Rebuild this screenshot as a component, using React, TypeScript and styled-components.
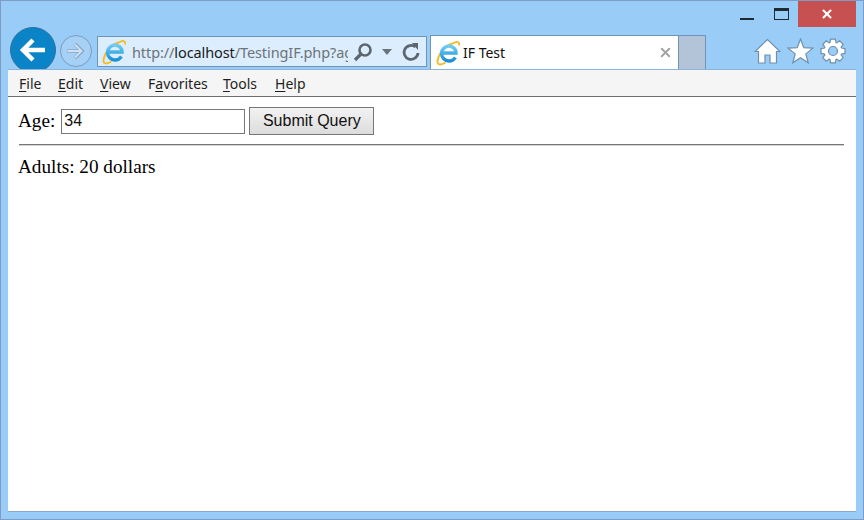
import React, { FC } from "react";
import styled, { createGlobalStyle } from "styled-components";
import { X } from "lucide-react";

const Global = createGlobalStyle`
    html, body {
        margin: 0;
        padding: 0;
        background: #99ccf8;
    }
`;

const Window = styled.div`
    box-sizing: border-box;
    width: 864px;
    height: 520px;
    display: flex;
    flex-direction: column;
    background: #99ccf7;
    border: 1px solid #7c9cc4;
    overflow: hidden;
    padding: 0 7px 7px 7px;
`;

const TitleBar = styled.div`
    height: 34px;
    flex: none;
    display: flex;
    justify-content: flex-end;
    align-items: flex-start;
`;

const WinButton = styled.div`
    width: 34px;
    height: 26px;
    display: flex;
    align-items: center;
    justify-content: center;
`;

const CloseButton = styled(WinButton)`
    width: 58px;
    background: #c75050;
    color: #fff;
`;

const MinGlyph = styled.div`
    width: 14px;
    height: 2px;
    background: #1f2a33;
    margin-top: 10px;
`;

const MaxGlyph = styled.div`
    box-sizing: border-box;
    width: 15px;
    height: 12px;
    border: 1px solid #1f2a33;
    border-top-width: 3px;
`;

const NavBar = styled.div`
    height: 34px;
    flex: none;
    display: flex;
    align-items: flex-start;
`;

const BackButton = styled.div`
    box-sizing: border-box;
    flex: none;
    width: 46px;
    height: 46px;
    margin: -8px 0 0 2px;
    border-radius: 50%;
    background: #0a84c6;
    border: 1px solid #2f6f9f;
    display: flex;
    align-items: center;
    justify-content: center;
`;

const ForwardButton = styled.div`
    box-sizing: border-box;
    flex: none;
    width: 32px;
    height: 32px;
    margin: 0 0 0 4px;
    border-radius: 50%;
    border: 1px solid #7d9cc0;
    background: #a6d0f5;
    display: flex;
    align-items: center;
    justify-content: center;
`;

const AddressBar = styled.div`
    box-sizing: border-box;
    flex: none;
    width: 330px;
    height: 31px;
    margin: 1px 0 0 5px;
    background: #dceefe;
    border: 1px solid #6f94ba;
    display: flex;
    align-items: center;
    padding-left: 4px;
`;

const Url = styled.div`
    flex: none;
    width: 216px;
    margin-left: 6px;
    overflow: hidden;
    white-space: nowrap;
    font: 14.5px "Noto Sans", sans-serif;
    letter-spacing: -0.1px;
    color: #6d7377;

    b {
        font-weight: 400;
        color: #1a1a1a;
    }
`;

const AddressTools = styled.div`
    display: flex;
    align-items: center;
    margin-left: 5px;
    gap: 9px;
`;

const Tab = styled.div`
    box-sizing: border-box;
    flex: none;
    width: 249px;
    height: 34px;
    margin-left: 3px;
    background: #fff;
    border: 1px solid #6f94ba;
    border-bottom: none;
    display: flex;
    align-items: center;
    padding: 0 5px 0 5px;
`;

const TabTitle = styled.div`
    flex: 1;
    margin-left: 3px;
    font: 14px "Noto Sans", sans-serif;
    color: #111;
`;

const NewTab = styled.div`
    box-sizing: border-box;
    flex: none;
    width: 27px;
    height: 34px;
    background: #b3c3d8;
    border: 1px solid #6f94ba;
    border-bottom: none;
    border-left: none;
`;

const ToolIcons = styled.div`
    display: flex;
    align-items: center;
    gap: 6px;
    margin: 3px 0 0 48px;
`;

const MenuBar = styled.div`
    position: relative;
    flex: none;
    box-sizing: border-box;
    height: 28px;
    background: #f5f5f5;
    border-top: 1px solid #8db4dc;
    border-bottom: 1px solid #6e6e6e;
    display: flex;
    align-items: center;
    padding-left: 11px;
`;

const MenuItem = styled.div<{ $width: number }>`
    width: ${(p) => p.$width}px;
    font: 14px "Noto Sans", sans-serif;
    color: #1e1e1e;

    u {
        text-underline-offset: 2px;
    }
`;

const Page = styled.div`
    flex: 1;
    background: #fff;
    border-bottom: 1px solid #8aa6c6;
    padding: 10px 12px 0 10px;
    font: 19.2px "Liberation Serif", serif;
    color: #000;
`;

const QueryForm = styled.form`
    display: flex;
    align-items: center;
    height: 28px;
`;

const AgeInput = styled.input`
    box-sizing: border-box;
    width: 184px;
    height: 25px;
    margin-left: 6px;
    padding: 0 2px;
    border: 1px solid #777;
    font: 16px "Liberation Sans", sans-serif;
    color: #111;
    outline: none;
`;

const SubmitButton = styled.button`
    box-sizing: border-box;
    width: 125px;
    height: 28px;
    margin-left: 4px;
    padding: 0;
    border: 1px solid #777;
    background: linear-gradient(#f2f2f2, #dcdcdc);
    font: 16px "Liberation Sans", sans-serif;
    color: #111;
`;

const Rule = styled.div`
    height: 1px;
    margin: 9px 0 0 1px;
    background: #777;
    border-bottom: 1px solid #d4d4d4;
`;

const Result = styled.div`
    margin-top: 10px;
`;

const IeLogo: FC = () => (
    <svg width="24" height="26" viewBox="0 0 24 26">
        <defs>
            <linearGradient id="ieBlue" x1="0" y1="0" x2="0" y2="1">
                <stop offset="0" stopColor="#6fcdf4" />
                <stop offset="1" stopColor="#1b8fd6" />
            </linearGradient>
        </defs>
        <path
            d="M17 3.500C20.500 1 24 1.500 23 5.500M17 3.500C9 5 2.500 14 1.500 21 1 25 5 25.500 9.500 22.500"
            fill="none"
            stroke="#f3bd2a"
            strokeWidth="1.900"
        />
        <path
            d="M6 13h14c0-4-3-7-7-7s-7.500 3.500-7.500 7.500 3.500 7.500 7.500 7.500c3 0 5-1.500 6.500-3.500"
            fill="none"
            stroke="url(#ieBlue)"
            strokeWidth="3.400"
        />
    </svg>
);

// 8-tooth cog outline, centred on 13,13
const cogPath = (() => {
    const pts: string[] = [];
    for (let i = 0; i < 8; i++) {
        const a = (i * Math.PI) / 4;
        [
            [-0.34, 9],
            [-0.2, 12.2],
            [0.2, 12.2],
            [0.34, 9],
        ].forEach(([da, r]) => {
            pts.push(`${(13 + r * Math.cos(a + da)).toFixed(2)} ${(13 + r * Math.sin(a + da)).toFixed(2)}`);
        });
    }
    return `M${pts.join("L")}Z`;
})();

const MENU: { before: string; key: string; after: string; width: number }[] = [
    { before: "", key: "F", after: "ile", width: 39 },
    { before: "", key: "E", after: "dit", width: 42 },
    { before: "", key: "V", after: "iew", width: 48 },
    { before: "F", key: "a", after: "vorites", width: 75 },
    { before: "", key: "T", after: "ools", width: 52 },
    { before: "", key: "H", after: "elp", width: 40 },
];

export default function App() {
    return (
        <Window>
            <Global />
            <TitleBar>
                <WinButton>
                    <MinGlyph />
                </WinButton>
                <WinButton>
                    <MaxGlyph />
                </WinButton>
                <CloseButton>
                    <X size={14} strokeWidth={3.500} />
                </CloseButton>
            </TitleBar>
            <NavBar>
                <BackButton>
                    <svg width="28" height="26" viewBox="0 0 28 26">
                        <path d="M26 13H5M14 3 4 13l10 10" fill="none" stroke="#fff" strokeWidth="4.500" />
                    </svg>
                </BackButton>
                <ForwardButton>
                    <svg width="20" height="18" viewBox="0 0 20 18">
                        <path d="M1 9h15M9 2l7 7-7 7" fill="none" stroke="#86a6c6" strokeWidth="3.600" />
                        <path d="M1.500 9h14M9 2.500l6.500 6.500-6.500 6.500" fill="none" stroke="#cfe0f0" strokeWidth="1.800" />
                    </svg>
                </ForwardButton>
                <AddressBar>
                    <IeLogo />
                    <Url>
                        http://<b>localhost</b>/TestingIF.php?age=34
                    </Url>
                    <AddressTools>
                        <svg width="20" height="20" viewBox="0 0 20 20">
                            <circle cx="12" cy="8" r="5.500" fill="none" stroke="#5d666e" strokeWidth="2.600" />
                            <path d="M8 12l-6 6" stroke="#5d666e" strokeWidth="3.200" />
                        </svg>
                        <svg width="10" height="6" viewBox="0 0 10 6">
                            <path d="M0 0h10L5 6z" fill="#6b747b" />
                        </svg>
                        <svg width="20" height="20" viewBox="0 0 20 20">
                            <path d="M14.500 5A7 7 0 1 0 17 11" fill="none" stroke="#5d666e" strokeWidth="2.800" />
                            <path d="M11 1h6v7z" fill="#5d666e" />
                        </svg>
                    </AddressTools>
                </AddressBar>
                <Tab>
                    <IeLogo />
                    <TabTitle>IF Test</TabTitle>
                    <X size={15} strokeWidth={3} color="#a3a3a3" />
                </Tab>
                <NewTab />
                <ToolIcons>
                    <svg width="27" height="26" viewBox="0 0 27 26">
                        <path
                            d="M13.500 1.500 1 13.500h3.500V25h6.500v-8h5v8h6.500V13.500H26z"
                            fill="#fff"
                            stroke="#6f8fae"
                            strokeWidth="1.200"
                        />
                    </svg>
                    <svg width="27" height="26" viewBox="0 0 27 26">
                        <path
                            d="M13.500 1l3.300 8.600 9.200.5-7.200 5.800 2.400 8.900-7.700-5-7.700 5 2.400-8.900L1 10.100l9.200-.5z"
                            fill="#fff"
                            stroke="#6f8fae"
                            strokeWidth="1.200"
                        />
                    </svg>
                    <svg width="26" height="26" viewBox="0 0 26 26">
                        <path d={cogPath} fill="#fff" stroke="#6f8fae" strokeWidth="1.200" />
                        <circle cx="13" cy="13" r="4.500" fill="#99ccf7" stroke="#6f8fae" strokeWidth="1.200" />
                    </svg>
                </ToolIcons>
            </NavBar>
            <MenuBar>
                {MENU.map((m) => (
                    <MenuItem key={m.key} $width={m.width}>
                        {m.before}
                        <u>{m.key}</u>
                        {m.after}
                    </MenuItem>
                ))}
            </MenuBar>
            <Page>
                <QueryForm onSubmit={(e) => e.preventDefault()}>
                    Age:
                    <AgeInput defaultValue="34" />
                    <SubmitButton type="submit">Submit Query</SubmitButton>
                </QueryForm>
                <Rule />
                <Result>Adults: 20 dollars</Result>
            </Page>
        </Window>
    );
}
